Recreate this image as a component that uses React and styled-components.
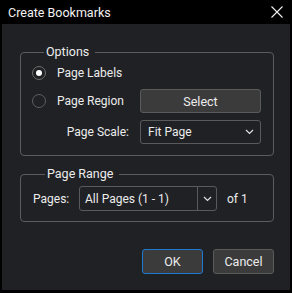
import React from "react";
import styled, { createGlobalStyle } from "styled-components";

const Global = createGlobalStyle`
  html, body { margin: 0; padding: 0; background: #000; }
  body { font-family: Roboto, "Noto Sans", sans-serif; font-size: 12px; color: #ececec; }
  * { box-sizing: border-box; }
`;

const Window = styled.div`
  width: 292px;
  height: 293px;
  background: #000;
  padding: 0 2px 3px 2px;
  display: flex;
  flex-direction: column;
`;

const TitleBar = styled.div`
  height: 24px;
  flex: none;
  display: flex;
  align-items: center;
  justify-content: space-between;
  padding: 0 7px 0 6px;
  font-size: 12.5px;
  color: #f2f2f2;
`;

const CloseBtn = styled.div`
  width: 12px;
  height: 12px;
  display: flex;
`;

const Body = styled.div`
  flex: 1;
  background: #202124;
  padding: 20px 16px 16px 18px;
  display: flex;
  flex-direction: column;
`;

const Group = styled.fieldset`
  margin: 0 0 ${(p) => p.$mb || 0}px 0;
  border: 1px solid #5c5c5c;
  border-radius: 4px;
  padding: ${(p) => p.$pad};
  min-width: 0;
`;

const Legend = styled.legend`
  margin-left: 12px;
  padding: 0 6px 0 2px;
  line-height: 16px;
  font-size: 12.5px;
`;

const OptionsGrid = styled.div`
  display: grid;
  grid-template-columns: 1fr 121px;
  column-gap: 11px;
  align-items: center;
  white-space: nowrap;
`;

const RadioRow = styled.label`
  display: flex;
  align-items: center;
  gap: 11px;
  height: 24px;
  margin-top: ${(p) => p.$mt || 0}px;
`;

const Radio = styled.span`
  width: 14px;
  height: 14px;
  flex: none;
  border-radius: 50%;
  border: 1px solid ${(p) => (p.$checked ? "#6e6e6e" : "#5e5e5e")};
  display: flex;
  align-items: center;
  justify-content: center;
  &::after {
    content: "";
    width: 6px;
    height: 6px;
    border-radius: 50%;
    background: #ffffff;
    display: ${(p) => (p.$checked ? "block" : "none")};
  }
`;

const Button = styled.button`
  font-family: inherit;
  font-size: 12.5px;
  color: #ececec;
  background: #3b3b3c;
  border: 1px solid ${(p) => (p.$primary ? "#1f78d1" : "#5a5a5a")};
  border-radius: 3px;
  height: ${(p) => p.$h || 25}px;
  width: ${(p) => p.$w || 61}px;
  padding: 0;
  margin-top: ${(p) => p.$mt || 0}px;
`;

const FieldLabel = styled.span`
  text-align: ${(p) => p.$align || "left"};
  margin-top: ${(p) => p.$mt || 0}px;
`;

const Dropdown = styled.div`
  height: ${(p) => p.$h || 24}px;
  width: ${(p) => p.$w}px;
  border: 1px solid #5a5a5a;
  border-radius: 3px;
  background: #202124;
  display: flex;
  align-items: center;
  margin-top: ${(p) => p.$mt || 0}px;
  white-space: nowrap;
`;

const DropText = styled.span`
  flex: 1;
  padding-left: ${(p) => p.$pl || 7}px;
`;

const DropArrow = styled.span`
  width: ${(p) => p.$w}px;
  height: 100%;
  display: flex;
  align-items: center;
  justify-content: center;
  border-left: ${(p) => (p.$divider ? "1px solid #5a5a5a" : "none")};
`;

const RangeRow = styled.div`
  display: flex;
  align-items: center;
`;

const PagesLabel = styled.span`
  width: 46px;
`;

const OfText = styled.span`
  margin-left: 10px;
`;

const Footer = styled.div`
  margin-top: auto;
  display: flex;
  justify-content: flex-end;
  gap: 10px;
`;

const Chevron = () => (
  <svg width="9" height="6" viewBox="0 0 9 6">
    <path d="M1 1 L4.5 4.5 L8 1" fill="none" stroke="#e0e0e0" strokeWidth="1.2" />
  </svg>
);

export default function App() {
  return (
    <>
      <Global />
      <Window>
        <TitleBar>
          <span>Create Bookmarks</span>
          <CloseBtn>
            <svg width="12" height="12" viewBox="0 0 12 12">
              <path d="M0.5 0.5 L11.5 11.5 M11.5 0.5 L0.5 11.5" stroke="#f0f0f0" strokeWidth="1.1" />
            </svg>
          </CloseBtn>
        </TitleBar>
        <Body>
          <Group $pad="1px 12px 11px 11px" $mb={10}>
            <Legend>Options</Legend>
            <OptionsGrid>
              <RadioRow>
                <Radio $checked />
                <span>Page Labels</span>
              </RadioRow>
              <span />
              <RadioRow $mt={4}>
                <Radio />
                <span>Page Region</span>
              </RadioRow>
              <Button $w={121} $h={24} $mt={4}>Select</Button>
              <FieldLabel $align="right" $mt={7}>Page Scale:</FieldLabel>
              <Dropdown $w={121} $mt={7}>
                <DropText>Fit Page</DropText>
                <DropArrow $w={22}>
                  <Chevron />
                </DropArrow>
              </Dropdown>
            </OptionsGrid>
          </Group>
          <Group $pad="4px 12px 10px 12px">
            <Legend>Page Range</Legend>
            <RangeRow>
              <PagesLabel>Pages:</PagesLabel>
              <Dropdown $w={138} $h={25}>
                <DropText $pl={5}>All Pages (1 - 1)</DropText>
                <DropArrow $w={19} $divider>
                  <Chevron />
                </DropArrow>
              </Dropdown>
              <OfText>of 1</OfText>
            </RangeRow>
          </Group>
          <Footer>
            <Button $primary>OK</Button>
            <Button>Cancel</Button>
          </Footer>
        </Body>
      </Window>
    </>
  );
}
